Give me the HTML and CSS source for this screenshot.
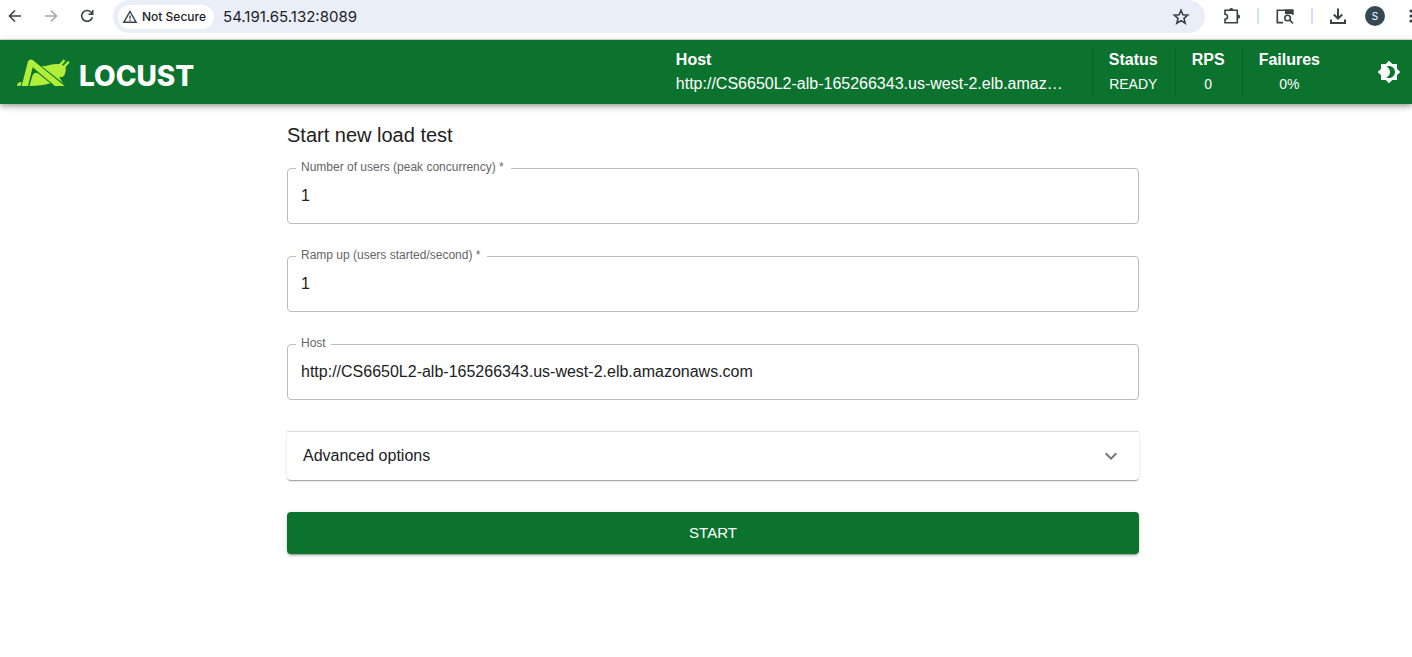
FILE: index.html
```html
<!DOCTYPE html>
<html lang="en">
<head>
<meta charset="utf-8">
<title>Locust</title>
<link rel="stylesheet" href="styles.css">
</head>
<body>
<div class="browser">
  <button class="tool" aria-label="Back"><svg width="16" height="16" viewBox="0 0 16 16"><path d="M14 8H3M8 2.500L2.500 8L8 13.500"/></svg></button>
  <button class="tool tool-off" aria-label="Forward"><svg width="16" height="16" viewBox="0 0 16 16"><path d="M2 8H13M8 2.500L13.500 8L8 13.500"/></svg></button>
  <button class="tool" aria-label="Reload"><svg width="16" height="16" viewBox="0 0 16 16"><path d="M13.300 9.200A5.400 5.400 0 1 1 12 4.200L13.500 6M13.700 2V6.200H9.500"/></svg></button>
  <div class="omnibox">
    <button class="security"><svg width="16" height="16" viewBox="0 0 16 16"><path d="M8 2.500L14.200 13.300H1.800Z M8 6.500V9.700M8 10.700V12"/></svg>Not Secure</button>
    <input class="address" aria-label="Address" value="54.191.65.132:8089">
    <button class="tool" aria-label="Bookmark"><svg width="18" height="18" viewBox="0 0 18 18"><path d="M9 2.300L10.900 6.800L15.700 7.200L12 10.400L13.200 15.200L9 12.600L4.800 15.200L6 10.400L2.300 7.200L7.100 6.800Z"/></svg></button>
  </div>
  <div class="browser-actions">
    <button class="tool" aria-label="Extensions"><svg width="18" height="18" viewBox="0 0 18 18"><path d="M2 3.300H14.300V15.700H2V12.200C5.300 12.200 5.300 7.300 2 7.300Z"/><path class="solid" d="M6.200 3A2.100 2.100 0 0 1 10.400 3ZM15 7.600A2.100 2.100 0 0 1 15 11.800Z"/></svg></button>
    <span class="bar"></span>
    <button class="tool" aria-label="Search tabs"><svg width="20" height="18" viewBox="0 0 20 18"><path d="M8 15.600H2.300V3.200H17.700V8"/><path class="solid" d="M10 2.500H18.400V7H10Z"/><circle cx="12.600" cy="11" r="2.800"/><path d="M14.800 13.200L18 16.400"/></svg></button>
    <span class="bar"></span>
    <button class="tool" aria-label="Downloads"><svg width="18" height="18" viewBox="0 0 18 18"><path d="M9 1.500V11.500M4.800 7.500L9 11.700L13.200 7.500M2 12.500V16H16V12.500" stroke-width="2"/></svg></button>
    <button class="avatar" aria-label="Profile">S</button>
    <button class="tool more" aria-label="Menu"><svg width="4" height="16" viewBox="0 0 4 16"><circle class="solid" cx="2" cy="3" r="1.600"/><circle class="solid" cx="2" cy="8" r="1.600"/><circle class="solid" cx="2" cy="13" r="1.600"/></svg></button>
  </div>
</div>
<header class="appbar">
  <a class="brand" href="#" aria-label="Locust">
    <svg width="53" height="27" viewBox="51 177 159 81">
      <path d="M51 257C51 250 56 246 65 246L62 257Z"/>
      <path d="M65 258L84 184Q88 176 97 179L194 258H165L98 202L84 258Z"/>
      <path d="M88 258L97 228C101 217 110 217 116 221L151 250C134 256 114 258 88 258Z"/>
      <path d="M125 199C143 198 160 190 178 192L191 178L196 183L186 194L190 197L204 183L209 187L197 201C198 213 196 225 188 231L178 232L190 251L184 245Z"/>
    </svg>
    <span>LOCUST</span>
  </a>
  <div class="stats">
    <div class="stat stat-host"><b>Host</b><span class="host-url">http://CS6650L2-alb-165266343.us-west-2.elb.amazonaws.com</span></div>
    <div class="stat"><b>Status</b><span>READY</span></div>
    <div class="stat"><b>RPS</b><span>0</span></div>
    <div class="stat"><b>Failures</b><span>0%</span></div>
  </div>
  <button class="theme" aria-label="Toggle theme"><svg width="24" height="24" viewBox="0 0 24 24"><path d="M20 8.690V4h-4.690L12 .690 8.690 4H4v4.690L.690 12 4 15.310V20h4.690L12 23.310 15.310 20H20v-4.690L23.310 12 20 8.690zM12 18c-.890 0-1.740-.200-2.500-.550C11.560 16.500 13 14.420 13 12s-1.440-4.500-3.500-5.450C10.260 6.200 11.110 6 12 6c3.310 0 6 2.690 6 6s-2.690 6-6 6z"/></svg></button>
</header>
<main class="page">
  <form class="form">
    <h1>Start new load test</h1>
    <fieldset class="field"><legend class="required"><label for="users">Number of users (peak concurrency) *</label></legend><input id="users" value="1"></fieldset>
    <fieldset class="field"><legend class="required"><label for="ramp">Ramp up (users started/second) *</label></legend><input id="ramp" value="1"></fieldset>
    <fieldset class="field"><legend><label for="host">Host</label></legend><input id="host" value="http://CS6650L2-alb-165266343.us-west-2.elb.amazonaws.com"></fieldset>
    <button type="button" class="accordion" aria-expanded="false">Advanced options<svg width="24" height="24" viewBox="0 0 24 24"><path d="M16.590 8.590L12 13.170 7.410 8.590 6 10l6 6 6-6z"/></svg></button>
    <button type="button" class="start">START</button>
  </form>
</main>
</body>
</html>
```
FILE: styles.css
```css
* { box-sizing: border-box; }
body {
  margin: 0;
  background: #fff;
  color: #212121;
  font: 16px/24px "Liberation Sans", Arial, sans-serif;
  overflow-x: hidden;
}
button, input { font: inherit; color: inherit; border: 0; background: none; padding: 0; margin: 0; }
svg { display: block; flex: none; }

.browser {
  display: flex;
  align-items: flex-start;
  height: 40px;
  padding-left: 7px;
  border-bottom: 1px solid #dadce0;
  font-family: Inter, sans-serif;
  color: #202124;
}
.tool { display: flex; align-items: center; height: 32px; margin-right: 20px; flex: none; }
.tool svg { fill: none; stroke: #3c4043; stroke-width: 1.6; }
.tool .solid { fill: #3c4043; stroke: none; }
.tool-off svg { stroke: #a5a7a9; }
.omnibox {
  display: flex;
  align-items: center;
  flex: 1;
  height: 33px;
  margin-left: -2px;
  padding-left: 5px;
  border-radius: 17px;
  background: #e9eef8;
}
.omnibox .tool { margin-right: 15px; }
.security {
  display: flex;
  align-items: center;
  gap: 4px;
  height: 24px;
  padding: 0 8px 0 4px;
  border-radius: 12px;
  background: #fff;
  font-size: 12px;
  font-weight: 500;
  white-space: nowrap;
}
.security svg { fill: none; stroke: #3c4043; stroke-width: 1.4; }
.address { flex: 1; min-width: 0; margin-left: 9px; font-size: 15px; }
.browser-actions { display: flex; align-items: center; height: 32px; padding-left: 18px; }
.browser-actions .tool { margin: 0; }
.bar { width: 2px; height: 16px; margin: 0 16px; background: #d0e1fb; }
.browser-actions .avatar {
  width: 20px;
  height: 20px;
  margin: 0 34px 0 18px;
  border-radius: 50%;
  background: #344955;
  color: #fff;
  font-size: 10px;
  line-height: 20px;
}
.browser-actions .more { margin-left: -10px; margin-right: -1px; }

.appbar {
  display: flex;
  align-items: center;
  height: 64px;
  padding: 0 11px 0 17px;
  background: #0b732e;
  color: #fff;
  box-shadow: 0 2px 4px -1px rgba(0,0,0,.2), 0 4px 5px rgba(0,0,0,.14), 0 1px 10px rgba(0,0,0,.12);
}
.brand { display: flex; align-items: center; gap: 9px; color: #fff; text-decoration: none; }
.brand span { padding-top: 8px; font: 800 28px/30px Inter, sans-serif; }
.brand svg { fill: #b0ee3a; }
.stats { display: flex; margin-left: auto; }
.stat {
  display: flex;
  flex-direction: column;
  align-items: center;
  height: 48px;
  padding: 0 17px 0 16px;
  border-left: 1px solid #0a6628;
}
.stat span { font-size: 14px; }
.stat-host { align-items: flex-start; padding-right: 22px; border: 0; }
.stat .host-url { max-width: 394px; font-size: 16px; overflow: hidden; text-overflow: ellipsis; white-space: nowrap; }
.theme { margin-left: 40px; }
.theme svg { fill: #fff; }

.page { padding: 15px 24px 16px 38px; }
.form { display: flex; flex-direction: column; max-width: 852px; margin: 0 auto; }
h1 { margin: 0 0 9px; font-size: 20px; line-height: 32px; font-weight: 400; }
.field {
  min-width: 0;
  margin: 0 0 24px;
  padding: 0 8px;
  border: 1px solid #bdbdbd;
  border-radius: 4px;
}
.field legend { padding: 0 5px 2px; color: #666; font-size: 12px; line-height: 14px; }
.field legend.required { padding-right: 7px; }
.field label { display: block; }
.field input { display: block; width: 100%; height: 47px; padding: 0 5px 8px; outline: 0; }
.accordion {
  display: flex;
  align-items: center;
  justify-content: space-between;
  height: 48px;
  margin: 8px 0 32px;
  padding: 0 16px;
  border-radius: 0 0 4px 4px;
  box-shadow: 0 -1px 0 #dedede, 0 2px 1px -1px rgba(0,0,0,.2), 0 1px 1px rgba(0,0,0,.14), 0 1px 3px rgba(0,0,0,.12);
}
.accordion svg { fill: #757575; }
.start {
  height: 42px;
  border-radius: 4px;
  background: #0b732e;
  color: #fff;
  font-size: 15px;
  box-shadow: 0 3px 1px -2px rgba(0,0,0,.2), 0 2px 2px rgba(0,0,0,.14), 0 1px 5px rgba(0,0,0,.12);
}
```
